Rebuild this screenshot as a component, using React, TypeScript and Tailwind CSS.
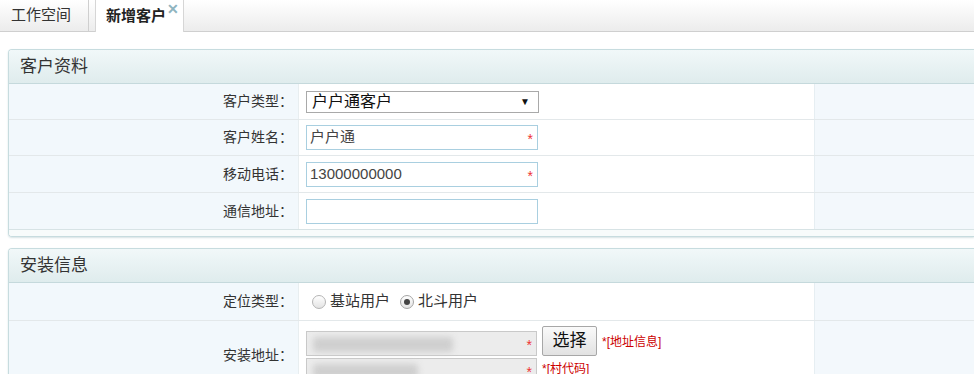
const font = { fontFamily: '"Liberation Sans", "Noto Sans CJK SC", sans-serif' }

function Row({
  label,
  children,
  h = 'h-[36px]',
  first = false,
}: {
  label: string
  children: React.ReactNode
  h?: string
  first?: boolean
}) {
  return (
    <div className={`flex ${h} ${first ? '' : 'border-t border-[#e3e8ea]'}`}>
      <div className="flex w-[289px] shrink-0 items-center justify-end bg-[#f2f8fc] pr-[5px] text-[14px] text-[#333]">
        {label}：
      </div>
      <div className="flex w-[516px] shrink-0 items-center border-l border-[#e8eef0] bg-white pl-[7px]">{children}</div>
      <div className="flex-1 border-l border-[#e6eef2] bg-[#f3f8fc]" />
    </div>
  )
}

function TextInput({ value, required }: { value?: string; required?: boolean }) {
  return (
    <div className="relative flex h-[25px] w-[232px] items-center border border-[#a9cfe0] bg-white pl-[3px] text-[15px] text-[#444]">
      {value}
      {required && <span className="absolute right-[4px] top-[3px] text-[14px] text-[#e33]">*</span>}
    </div>
  )
}

function Panel({ title, children }: { title: string; children: React.ReactNode }) {
  return (
    <div className="ml-[8px] overflow-hidden rounded-l-[4px] border border-r-0 border-[#c7dcdf] shadow-[0_1px_2px_#d5e2e4]">
      <div className="flex h-[34px] items-center border-b border-[#c5d9dc] bg-gradient-to-b from-[#f1f8f9] to-[#dfeced] pl-[11px] text-[17px] text-[#333]">
        {title}
      </div>
      {children}
    </div>
  )
}

function BlurInput({ width }: { width: number }) {
  return (
    <div className="relative h-[25px] w-[231px] shrink-0 border border-[#c9c9c9] bg-[#ececec]">
      <div className="absolute left-[6px] top-[5px] h-[15px] rounded bg-[#cfcfcf] blur-[3px]" style={{ width }} />
      <span className="absolute right-[4px] top-[3px] text-[14px] text-[#e33]">*</span>
    </div>
  )
}

export default function App() {
  return (
    <div className="h-[374px] w-[974px] overflow-hidden bg-white" style={font}>
      {/* tab bar */}
      <div className="flex h-[32px] items-end border-b border-[#cfcfcf] bg-gradient-to-b from-white to-[#ececec]">
        <div className="flex h-[32px] w-[89px] items-center border-r border-[#cfcfcf] pl-[11px] text-[15px] text-[#333]">
          工作空间
        </div>
        <div className="relative -mb-px ml-[6px] flex h-[32px] w-[89px] items-center border-x border-[#d6d6d6] bg-white pl-[10px] text-[15px] font-bold text-[#222]">
          新增客户
          <span className="absolute right-[4px] top-[2px] text-[14px] font-bold leading-none text-[#8fb4bf]">✕</span>
        </div>
      </div>

      <div className="pt-[17px]">
        <Panel title="客户资料">
          <Row label="客户类型" h="h-[35px]" first>
            <div className="flex h-[22px] w-[233px] items-center justify-between border border-[#a9a9a9] bg-white pl-[5px] pr-[8px] text-[16px] text-[#111]">
              户户通客户
              <span className="text-[10px] leading-none">▼</span>
            </div>
          </Row>
          <Row label="客户姓名">
            <TextInput value="户户通" required />
          </Row>
          <Row label="移动电话" h="h-[37px]">
            <TextInput value="13000000000" required />
          </Row>
          <Row label="通信地址" h="h-[37px]">
            <TextInput />
          </Row>
          <div className="h-[7px] border-t border-[#d7e3e5] bg-[#f7fbfb]" />
        </Panel>

        <div className="h-[11px]" />

        <Panel title="安装信息">
          <Row label="定位类型" h="h-[37px]" first>
            <div className="flex items-center text-[15px] text-[#333]">
              <span className="ml-[6px] mr-[4px] h-[14px] w-[14px] rounded-full border border-[#b5b5b5] bg-gradient-to-b from-white to-[#e3e3e3]" />
              基站用户
              <span className="ml-[10px] mr-[4px] flex h-[14px] w-[14px] items-center justify-center rounded-full border border-[#a5a5a5] bg-gradient-to-b from-white to-[#e3e3e3]">
                <span className="h-[6px] w-[6px] rounded-full bg-[#444]" />
              </span>
              北斗用户
            </div>
          </Row>
          <Row label="安装地址" h="h-[70px]">
            <div className="flex flex-col gap-[2px] self-start pt-[10px]">
              <div className="flex items-start">
                <BlurInput width={140} />
                <button className="-mt-[5px] ml-[5px] h-[30px] w-[55px] rounded-[2px] border border-[#a7a7a7] bg-gradient-to-b from-[#fafafa] to-[#e2e2e2] text-[17px] text-[#111]">
                  选择
                </button>
                <span className="ml-[5px] mt-[2px] text-[12px] text-[#c00]">*[地址信息]</span>
              </div>
              <div className="flex items-start">
                <BlurInput width={105} />
                <span className="ml-[5px] mt-[2px] text-[12px] text-[#c00]">*[村代码]</span>
              </div>
            </div>
          </Row>
        </Panel>
      </div>
    </div>
  )
}
